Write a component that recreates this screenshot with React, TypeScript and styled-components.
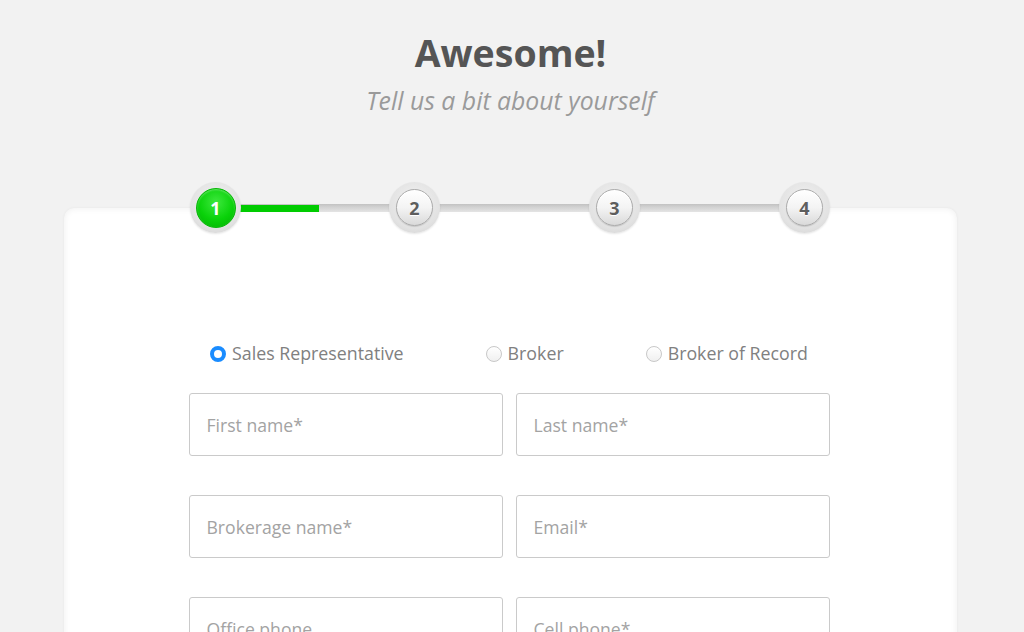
import React from "react";
import styled, { createGlobalStyle } from "styled-components";

const Global = createGlobalStyle`
  html, body { margin: 0; padding: 0; background: #f2f2f2; }
  body { font-family: "Open Sans", "Liberation Sans", sans-serif; overflow: hidden; }
  * { box-sizing: border-box; }
`;

const Page = styled.div`
  display: flex;
  flex-direction: column;
  align-items: center;
  min-height: 632px;
  padding-top: 27px;
  padding-right: 3px;
`;

const Title = styled.h1`
  margin: 0;
  font-size: 37.5px;
  line-height: 52px;
  font-weight: 700;
  color: #555;
`;

const Subtitle = styled.p`
  margin: 4px 0 0;
  font-size: 24.8px;
  line-height: 34px;
  font-style: italic;
  color: #9a9a9a;
`;

const Stepper = styled.div`
  position: relative;
  z-index: 1;
  display: flex;
  align-items: center;
  width: 639px;
  margin-top: 65px;
  margin-bottom: -25px;
  margin-left: -2px;
`;

const Step = styled.div`
  position: relative;
  z-index: 2;
  flex: none;
  width: 51px;
  height: 51px;
  border-radius: 50%;
  background: radial-gradient(circle at 50% 40%, #f2f2f2 0%, #e2e2e2 65%, #d0d0d0 100%);
  box-shadow: 0 1px 2px rgba(0, 0, 0, 0.1);
  display: flex;
  align-items: center;
  justify-content: center;
`;

const StepInner = styled.div<{ $active?: boolean }>`
  width: ${(p) => (p.$active ? 40 : 37)}px;
  height: ${(p) => (p.$active ? 40 : 37)}px;
  border-radius: 50%;
  display: flex;
  align-items: center;
  justify-content: center;
  font-size: 18px;
  font-weight: 700;
  color: ${(p) => (p.$active ? "#fff" : "#5e5e5e")};
  background: ${(p) =>
    p.$active
      ? "radial-gradient(circle at 50% 35%, #3de83d 0%, #0ad20a 55%, #00b000 100%)"
      : "linear-gradient(180deg, #ffffff 0%, #f4f4f4 50%, #dadada 100%)"};
  border: 1px solid ${(p) => (p.$active ? "#05b805" : "#ababab")};
  box-shadow: ${(p) =>
    p.$active
      ? "inset 0 1px 2px rgba(255,255,255,0.35)"
      : "inset 0 1px 1px #fff, 0 1px 1px rgba(0,0,0,0.12)"};
  text-shadow: ${(p) => (p.$active ? "none" : "0 1px 0 #fff")};
`;

const Connector = styled.div<{ $w: number }>`
  position: relative;
  z-index: 1;
  flex: none;
  width: ${(p) => p.$w + 14}px;
  margin: 0 -7px;
  height: 8px;
  background: linear-gradient(180deg, #c2c2c2 0%, #d0d0d0 35%, #e4e4e4 100%);
`;

const Progress = styled.div<{ $w: number }>`
  width: ${(p) => p.$w}px;
  height: 7px;
  margin-top: 1px;
  background: #00cc00;
`;

const Card = styled.div`
  width: 893px;
  min-height: 460px;
  margin-left: -1px;
  background: #fff;
  border-radius: 10px;
  box-shadow: inset 0 0 7px rgba(0, 0, 0, 0.07), 0 0 3px rgba(0, 0, 0, 0.05);
  padding-top: 133px;
  display: flex;
  flex-direction: column;
  align-items: center;
`;

const RadioRow = styled.div`
  display: flex;
  justify-content: center;
  gap: 82px;
  height: 24px;
  align-items: center;
  width: 641px;
  margin-left: -2px;
`;

const RadioItem = styled.label`
  display: flex;
  align-items: center;
  gap: 6px;
  font-size: 17.8px;
  color: #808080;
  white-space: nowrap;
`;

const RadioDot = styled.span<{ $checked?: boolean }>`
  display: inline-block;
  width: 16px;
  height: 16px;
  border-radius: 50%;
  margin-top: 2px;
  background: ${(p) =>
    p.$checked ? "#fff" : "linear-gradient(180deg, #ffffff, #f0f0f0)"};
  border: ${(p) => (p.$checked ? "4.5px solid #1a8cff" : "1px solid #c8c8c8")};
`;

const FormGrid = styled.div`
  margin-top: 28px;
  margin-left: -2px;
  display: grid;
  grid-template-columns: 314px 314px;
  column-gap: 13px;
  row-gap: 39px;
`;

const Field = styled.input`
  width: 314px;
  height: 63px;
  border: 1px solid #cacaca;
  border-radius: 3px;
  padding: 0 17px;
  font-family: "Open Sans", "Liberation Sans", sans-serif;
  font-size: 17.6px;
  color: #555;
  background: #fff;
  outline: none;
  &::placeholder { color: #a3a3a3; }
`;

const steps = [1, 2, 3, 4];
const gaps = [148, 149, 139];

export default function App() {
  return (
    <>
      <Global />
      <Page>
        <Title>Awesome!</Title>
        <Subtitle>Tell us a bit about yourself</Subtitle>
        <Stepper>
          {steps.map((s, i) => (
            <React.Fragment key={s}>
              <Step>
                <StepInner $active={s === 1}>{s}</StepInner>
              </Step>
              {i < gaps.length && (
                <Connector $w={gaps[i]}>
                  {i === 0 && <Progress $w={85} />}
                </Connector>
              )}
            </React.Fragment>
          ))}
        </Stepper>
        <Card>
          <RadioRow>
            <RadioItem>
              <RadioDot $checked />
              Sales Representative
            </RadioItem>
            <RadioItem>
              <RadioDot />
              Broker
            </RadioItem>
            <RadioItem>
              <RadioDot />
              Broker of Record
            </RadioItem>
          </RadioRow>
          <FormGrid>
            <Field placeholder="First name*" />
            <Field placeholder="Last name*" />
            <Field placeholder="Brokerage name*" />
            <Field placeholder="Email*" />
            <Field placeholder="Office phone" />
            <Field placeholder="Cell phone*" />
          </FormGrid>
        </Card>
      </Page>
    </>
  );
}
